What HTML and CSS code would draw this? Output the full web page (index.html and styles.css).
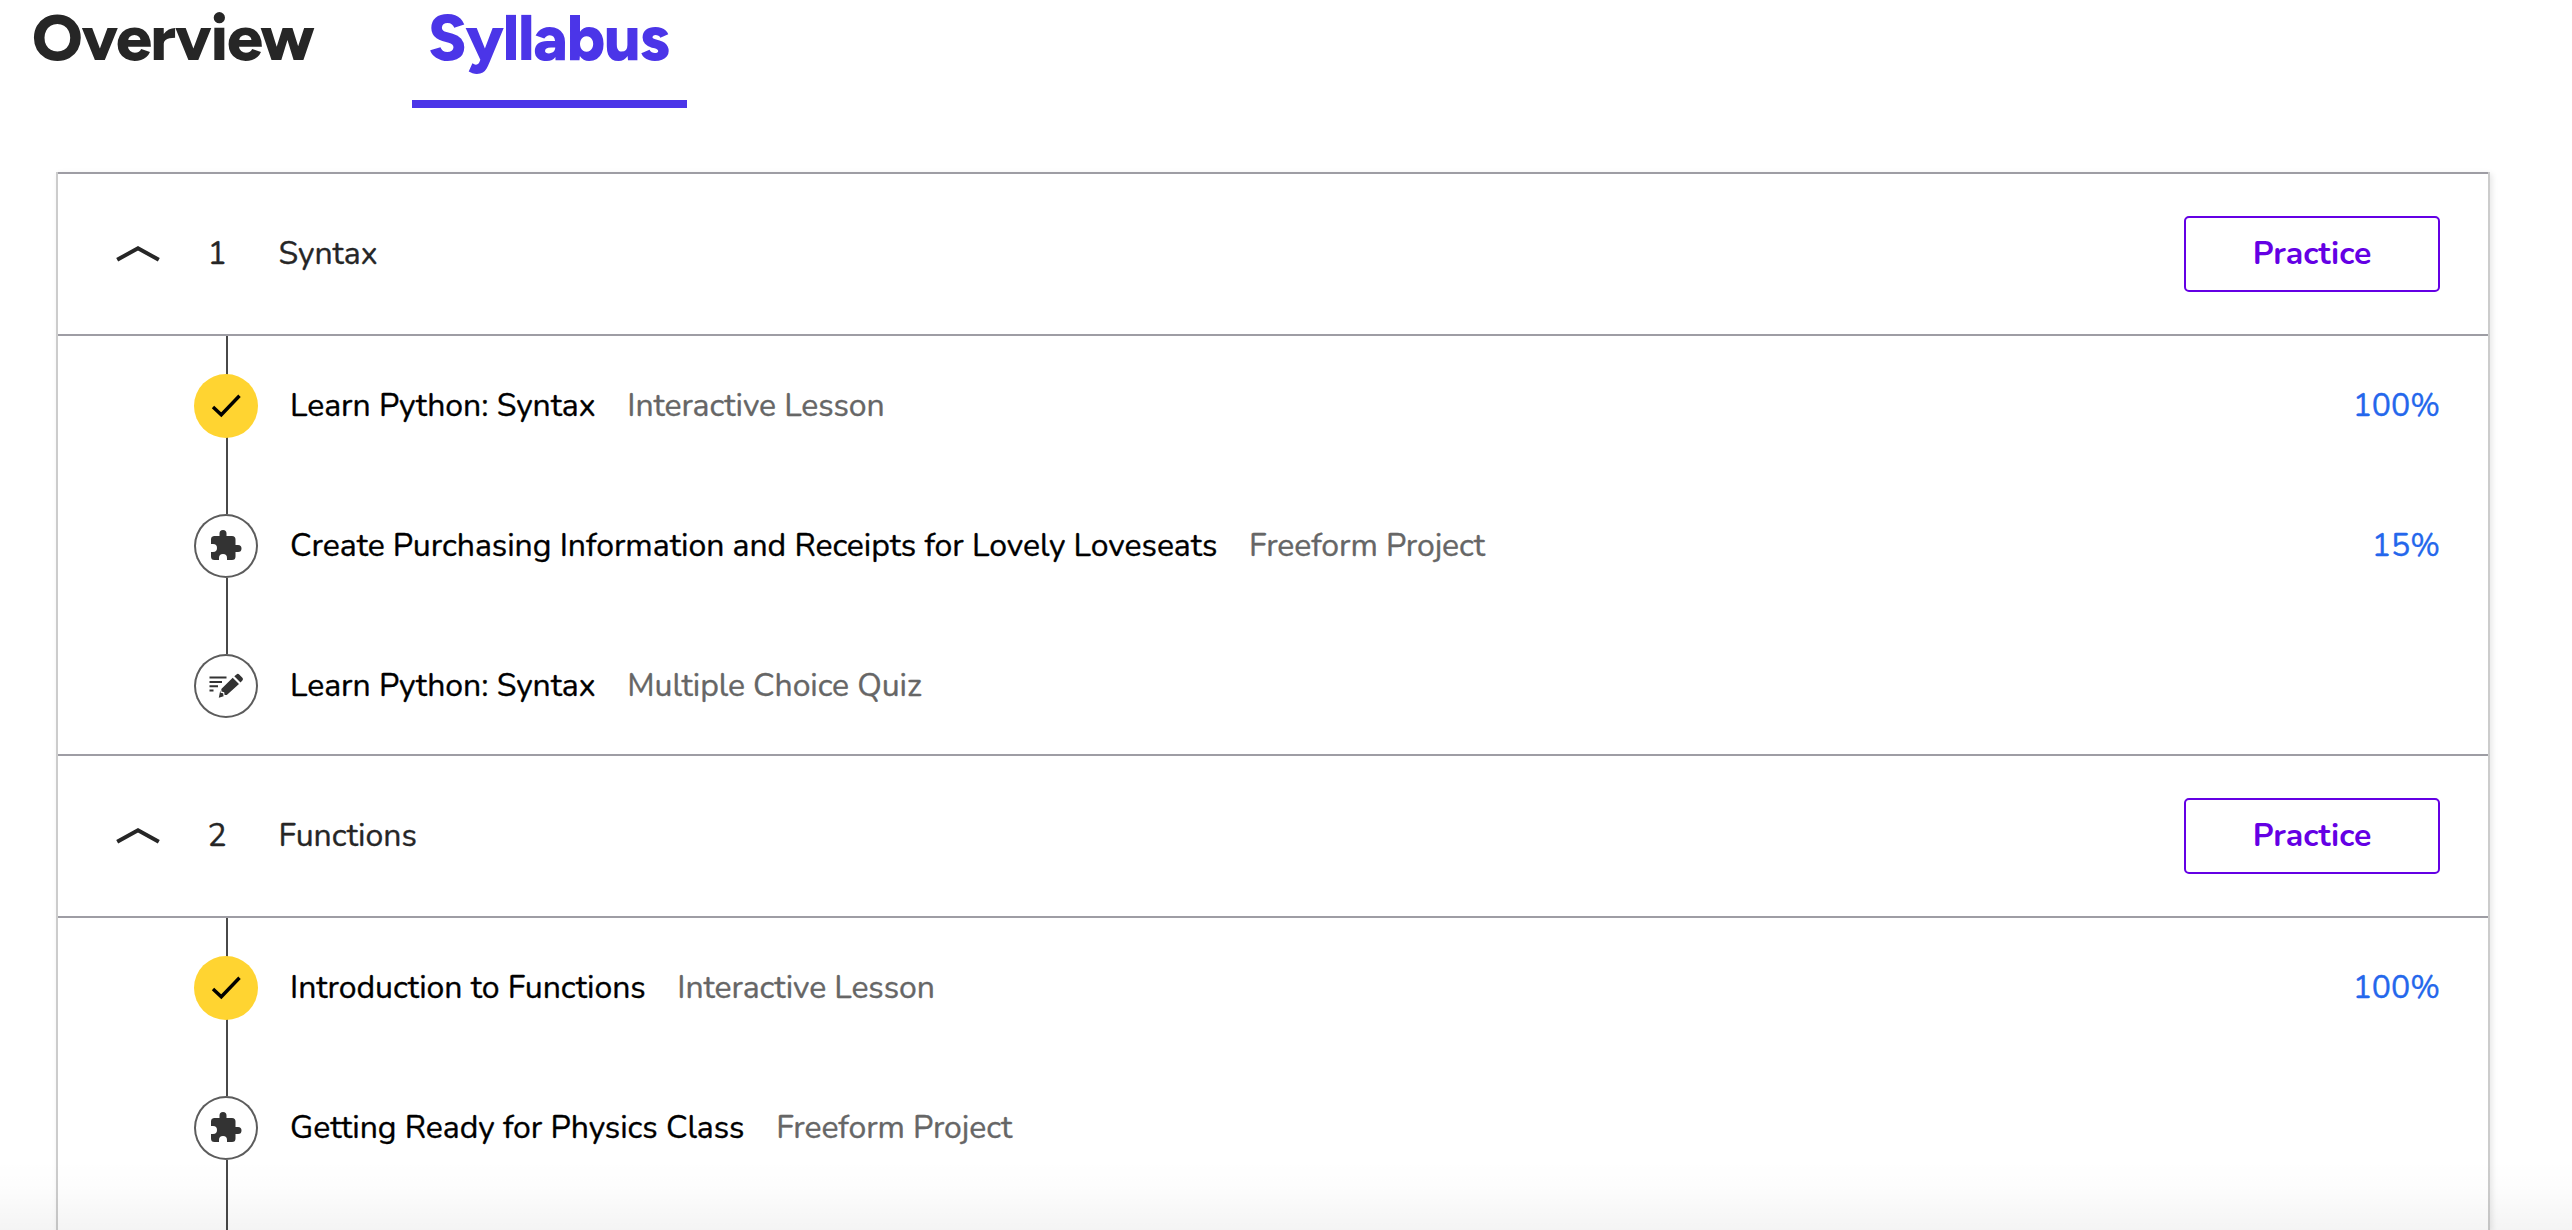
FILE: index.html
```html
<!DOCTYPE html>
<html lang="en">
<head>
<meta charset="utf-8">
<title>Syllabus</title>
<link rel="stylesheet" href="styles.css">
</head>
<body>
<svg class="sprite" aria-hidden="true">
  <symbol id="chevron" viewBox="0 0 44 20"><path d="M1.2 15.8 22 4.2l20.800 11.600" fill="none" stroke="currentColor" stroke-width="4"/></symbol>
  <symbol id="check" viewBox="0 0 64 64"><path d="M19 33l8.300 7.800L45.500 21.800" fill="none" stroke="currentColor" stroke-width="3.400"/></symbol>
  <symbol id="puzzle" viewBox="0 0 64 64"><path fill="currentColor" d="M20 22h5.500v-2.500a3.500 3.500 0 0 1 7 0V22H38a3.500 3.500 0 0 1 3.500 3.500V31H44a3.500 3.500 0 0 1 0 7h-2.500v4.500A3.500 3.500 0 0 1 38 46h-5v-2a4 4 0 0 0-8 0v2h-4.500a3.500 3.500 0 0 1-3.500-3.500V38h2a4 4 0 0 0 0-8h-2v-4.500A3.500 3.500 0 0 1 20 22z"/></symbol>
  <symbol id="quiz" viewBox="0 0 64 64"><path d="M15.500 23.500h17M15.500 28h12.500M15.500 32.200h8.500M15.500 36.500h4" fill="none" stroke="currentColor" stroke-width="2"/><path fill="currentColor" d="M38.700 23.800l6.300 6.300-12.200 11-2.200-.2-.4-2.600-2.700-.7-.2-2.700zM40.300 22.300l2.200-1.900a2 2 0 0 1 2.700.1l3.200 3.300a2 2 0 0 1 0 2.700l-1.900 2.100zM26.300 36.300l.3 2.500 2.500.5.500 2.900-4.800 1.600z"/></symbol>
</svg>

<nav class="tabs">
  <a class="tab overview">Overview</a>
  <a class="tab active">Syllabus</a>
</nav>

<main class="panel">
  <section class="module">
    <header class="module-head">
      <svg class="chevron"><use href="#chevron"/></svg>
      <span class="number">1</span>
      <h2 class="name">Syntax</h2>
      <button class="practice">Practice</button>
    </header>
    <ul class="items">
      <li class="item">
        <span class="badge done"><svg><use href="#check"/></svg></span>
        <span class="title">Learn Python: Syntax</span>
        <span class="kind">Interactive Lesson</span>
        <span class="percent">100%</span>
      </li>
      <li class="item">
        <span class="badge"><svg><use href="#puzzle"/></svg></span>
        <span class="title">Create Purchasing Information and Receipts for Lovely Loveseats</span>
        <span class="kind">Freeform Project</span>
        <span class="percent">15%</span>
      </li>
      <li class="item last">
        <span class="badge"><svg><use href="#quiz"/></svg></span>
        <span class="title">Learn Python: Syntax</span>
        <span class="kind">Multiple Choice Quiz</span>
      </li>
    </ul>
  </section>
  <section class="module">
    <header class="module-head">
      <svg class="chevron"><use href="#chevron"/></svg>
      <span class="number">2</span>
      <h2 class="name">Functions</h2>
      <button class="practice">Practice</button>
    </header>
    <ul class="items open">
      <li class="item">
        <span class="badge done"><svg><use href="#check"/></svg></span>
        <span class="title">Introduction to Functions</span>
        <span class="kind">Interactive Lesson</span>
        <span class="percent">100%</span>
      </li>
      <li class="item">
        <span class="badge"><svg><use href="#puzzle"/></svg></span>
        <span class="title">Getting Ready for Physics Class</span>
        <span class="kind">Freeform Project</span>
      </li>
      <li class="item cut"></li>
    </ul>
  </section>
</main>
<div class="fade"></div>
</body>
</html>
```
FILE: styles.css
```css
* { box-sizing: border-box; }
html { overflow: hidden; }
body {
  margin: 0;
  height: 1230px;
  overflow: hidden;
  background: #fff;
  color: #262626;
  font-family: Nunito, Lato, "Open Sans", sans-serif;
  font-size: 32px;
  line-height: 48px;
}
.sprite { display: none; }

.tabs {
  display: flex;
  gap: 83px;
  height: 172px;
  padding-left: 16px;
}
.tab {
  height: 108px;
  padding: 0 16px;
  font-family: Figtree, Lato, sans-serif;
  font-weight: 800;
  font-size: 64px;
  line-height: 76px;
  letter-spacing: -1.150px;
  white-space: nowrap;
  width: 313px;
}
.tab.active {
  width: 275px;
  color: #4b35e8;
  border-bottom: 8px solid #4b35e8;
}

.panel {
  width: 2434px;
  height: 1058px;
  margin-left: 56px;
  border: solid #ccc;
  border-width: 0 2px;
  box-shadow: 2px 2px 6px rgba(0, 0, 0, .1);
}
.module-head {
  display: flex;
  align-items: center;
  height: 164px;
  padding: 0 48px 0 58px;
  border: solid #9e9da4;
  border-width: 2px 0;
}
.chevron { width: 44px; height: 20px; }
.number { width: 71px; margin-left: 47.500px; }
.name {
  margin: 0 auto 0 0;
  font-size: inherit;
  font-weight: 400;
}
.number, .name, .title, .kind, .percent { -webkit-text-stroke: .35px currentColor; }
.practice {
  width: 256px;
  height: 76px;
  padding: 0;
  border: 2px solid #6400e4;
  border-radius: 5px;
  background: #fff;
  color: #6400e4;
  font: bold 32px/48px Nunito, Lato, "Open Sans", sans-serif;
}

.items {
  height: 418px;
  margin: 0;
  padding: 0;
  list-style: none;
}
.items.open { height: 312px; }
.item {
  display: flex;
  align-items: center;
  height: 140px;
  padding: 0 48px 0 136px;
  background: linear-gradient(#484848, #484848) 168px 0 / 2px 100% no-repeat;
  white-space: nowrap;
}
.item.last { background-size: 2px 70px; }
.item.cut { height: 32px; }
.badge {
  width: 64px;
  height: 64px;
  margin-right: 32px;
  border-radius: 50%;
  background: #fff;
  box-shadow: inset 0 0 0 2px #5c5c5c;
  color: #333;
}
.badge svg { display: block; width: 64px; height: 64px; }
.badge.done { background: #ffd431; box-shadow: none; color: #000; }
.title { color: #000; letter-spacing: -.035px; }
.kind { margin-left: 31.700px; color: #666; letter-spacing: -.08px; }
.percent { margin-left: auto; color: #2467ec; }

.fade {
  position: absolute;
  inset: 1160px 0 0;
  background: linear-gradient(rgba(0, 0, 0, 0), rgba(0, 0, 0, .012) 45%, rgba(0, 0, 0, .045));
}
```
